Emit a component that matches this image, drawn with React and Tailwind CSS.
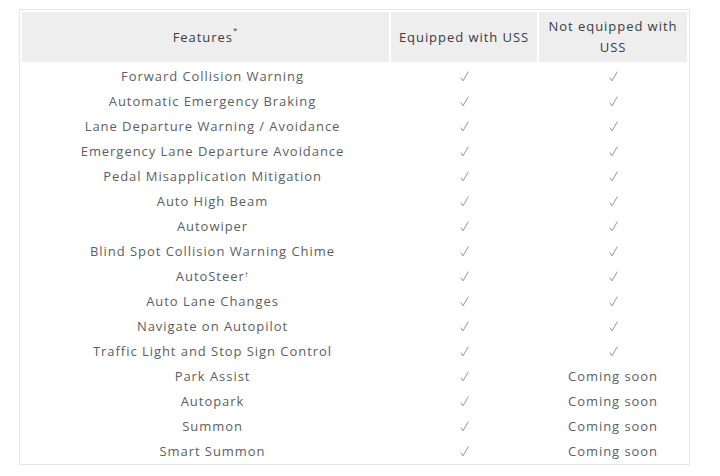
const ROWS = [
  ['Forward Collision Warning', true, true],
  ['Automatic Emergency Braking', true, true],
  ['Lane Departure Warning / Avoidance', true, true],
  ['Emergency Lane Departure Avoidance', true, true],
  ['Pedal Misapplication Mitigation', true, true],
  ['Auto High Beam', true, true],
  ['Autowiper', true, true],
  ['Blind Spot Collision Warning Chime', true, true],
  ['AutoSteer', true, true, '†'],
  ['Auto Lane Changes', true, true],
  ['Navigate on Autopilot', true, true],
  ['Traffic Light and Stop Sign Control', true, true],
  ['Park Assist', true, false],
  ['Autopark', true, false],
  ['Summon', true, false],
  ['Smart Summon', true, false],
]

function Check() {
  return (
    <svg width="9" height="11" viewBox="0 0 9 11" className="inline-block align-[-1px]">
      <path d="M0.8 6.6 L3 9.8 L8.4 0.6" fill="none" stroke="#8a8a8a" strokeWidth="0.9" />
    </svg>
  )
}

export default function App() {
  return (
    <div className="w-[720px] h-[476px] bg-white pt-[9px] pl-[19px] font-['Open_Sans',sans-serif]">
      <table className="w-[671px] border border-[#e6e6e6] border-separate border-spacing-[2px] text-[13px] tracking-[0.95px] text-[#5c5e62] text-center">
        <thead>
          <tr className="h-[50px]">
            <th className="w-[367px] bg-[#eeeeee] font-normal text-[#393c41] leading-5">
              Features<sup className="text-[8px] align-super">*</sup>
            </th>
            <th className="w-[146px] bg-[#eeeeee] font-normal text-[#393c41] leading-5 px-1">Equipped with USS</th>
            <th className="bg-[#eeeeee] font-normal text-[#393c41] leading-[21px] px-2">Not equipped with USS</th>
          </tr>
        </thead>
        <tbody>
          {ROWS.map(([name, a, b, mark]) => (
            <tr key={name} className="h-[23px]">
              <td className="leading-5 pl-[14px]">
                {name}
                {mark && <sup className="text-[7px]">{mark}</sup>}
              </td>
              <td className="leading-5">{a ? <Check /> : 'Coming soon'}</td>
              <td className="leading-5">{b ? <Check /> : 'Coming soon'}</td>
            </tr>
          ))}
        </tbody>
      </table>
    </div>
  )
}
